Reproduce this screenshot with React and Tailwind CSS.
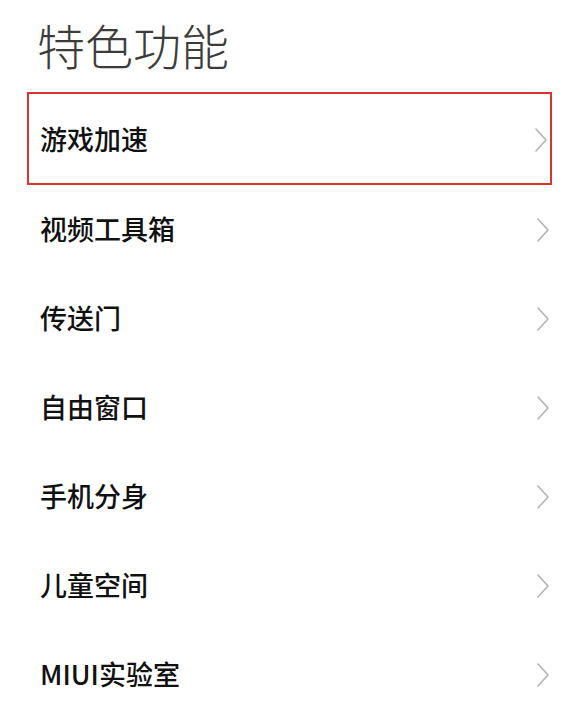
const items = ["游戏加速", "视频工具箱", "传送门", "自由窗口", "手机分身", "儿童空间", "MIUI实验室"];

const Chevron = () => (
  <svg width="14" height="26" viewBox="0 0 14 26" fill="none" className="shrink-0">
    <path d="M2 2 L12 13 L2 24" stroke="#b3b3b3" strokeWidth="1.6" strokeLinecap="round" strokeLinejoin="round" />
  </svg>
);

export default function App() {
  return (
    <div
      className="w-[585px] h-[705px] bg-white overflow-hidden"
      style={{ fontFamily: '"Noto Sans CJK SC", "Noto Sans", sans-serif' }}
    >
      <div className="h-[92px] pl-[37px] pt-[13px]">
        <h1 className="text-[48px] leading-[62px] font-light text-[#3c3c3c]">特色功能</h1>
      </div>

      <div className="flex flex-col">
        {items.map((item, idx) =>
          idx === 0 ? (
            <div
              key={item}
              className="ml-[27px] w-[525px] h-[93px] border-2 border-[#d9352f] flex items-center justify-between pl-[11px] pr-[2px] pt-[2px]"
            >
              <span className="text-[27px] font-medium text-[#111]">{item}</span>
              <Chevron />
            </div>
          ) : (
            <div key={item} className="h-[89px] flex items-center justify-between pl-[40px] pr-[35px]">
              <span className="text-[27px] font-medium text-[#111]">{item}</span>
              <Chevron />
            </div>
          )
        )}
      </div>
    </div>
  );
}
